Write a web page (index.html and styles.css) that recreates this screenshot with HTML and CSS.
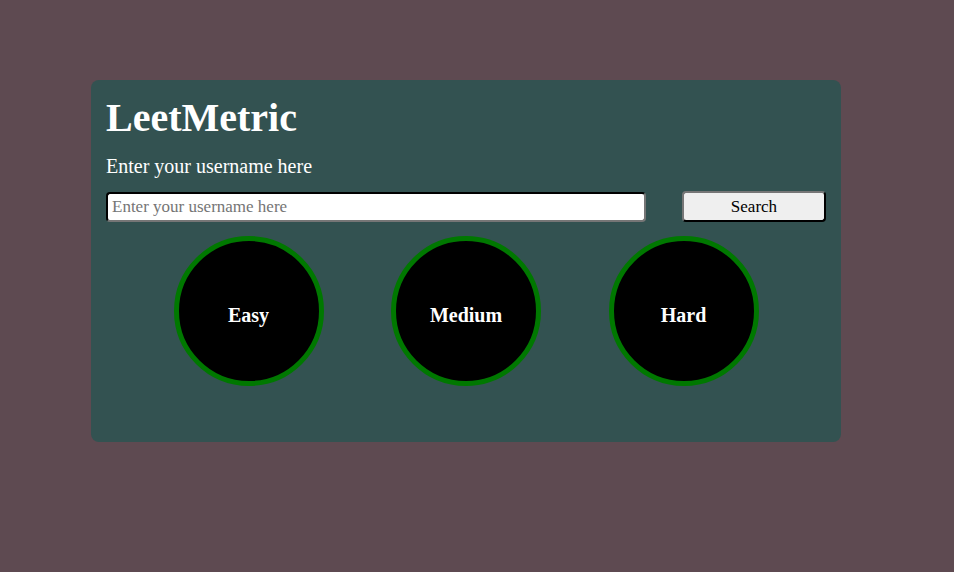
FILE: index.html
```html
<!DOCTYPE html>
<html lang="en">
<head>
<meta charset="UTF-8">
<title>LeetMetric</title>
<link rel="stylesheet" href="styles.css">
</head>
<body>
<div class="container">
  <h1 class="title">LeetMetric</h1>
  <p class="subtitle">Enter your username here</p>
  <div class="search-row">
    <input class="user-input" type="text" placeholder="Enter your username here">
    <button class="search-btn">Search</button>
  </div>
  <div class="stats">
    <div class="circle"><span>Easy</span></div>
    <div class="circle"><span>Medium</span></div>
    <div class="circle"><span>Hard</span></div>
  </div>
</div>
</body>
</html>
```
FILE: styles.css
```css
html, body {
  margin: 0;
  padding: 0;
}
body {
  background: #5e4a51;
  font-family: "Liberation Serif", "Times New Roman", serif;
  height: 572px;
  padding-top: 80px;
  box-sizing: border-box;
}
.container {
  width: 750px;
  height: 362px;
  margin-left: 91px;
  box-sizing: border-box;
  padding: 15px 15px 15px;
  background: #335251;
  border-radius: 8px;
  color: #fff;
}
.title {
  margin: 0;
  font-size: 40px;
  font-weight: bold;
  line-height: 46px;
}
.subtitle {
  margin: 14px 0 0;
  font-size: 20px;
  line-height: 23px;
}
.search-row {
  margin-top: 13px;
  display: flex;
  justify-content: space-between;
  align-items: center;
}
.user-input {
  width: 540px;
  height: 30px;
  box-sizing: border-box;
  border: 2px inset #767676;
  border-top-color: #1b1b1b;
  border-left-color: #1b1b1b;
  border-radius: 4px;
  background: #fff;
  font-family: "Liberation Serif", "Times New Roman", serif;
  font-size: 17px;
  padding: 0 4px;
  color: #000;
}
.user-input::placeholder {
  color: #757575;
}
.search-btn {
  width: 144px;
  height: 31px;
  box-sizing: border-box;
  background: #efefef;
  border: 2px outset #000;
  border-top-color: #767676;
  border-left-color: #767676;
  border-radius: 4px;
  font-family: "Liberation Serif", "Times New Roman", serif;
  font-size: 17px;
  color: #000;
  padding: 0;
}
.stats {
  margin-top: 14px;
  display: flex;
  justify-content: space-evenly;
}
.circle {
  width: 150px;
  height: 150px;
  box-sizing: border-box;
  border: 5px solid #007800;
  border-radius: 50%;
  background: #000;
  display: flex;
  align-items: center;
  justify-content: center;
  font-size: 20px;
  font-weight: bold;
  color: #fff;
  padding-top: 8px;
}
```
